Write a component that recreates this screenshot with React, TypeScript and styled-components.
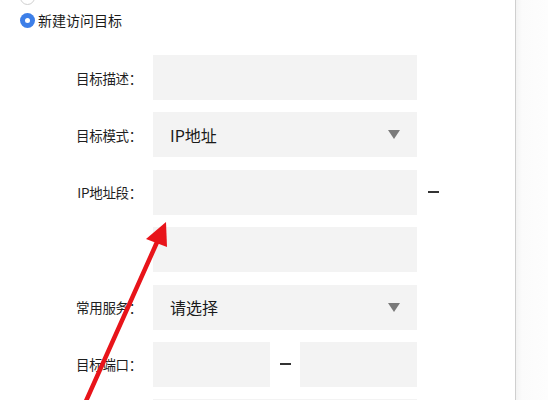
import React from "react";
import styled, { createGlobalStyle } from "styled-components";

const Global = createGlobalStyle`
  html, body { margin: 0; padding: 0; background: #fff; }
  body { font-family: "Noto Sans CJK SC", "Noto Sans", sans-serif; color: #333; overflow: hidden; }
`;

const Page = styled.div`
  position: relative;
  display: flex;
  width: 548px;
  height: 400px;
  overflow: hidden;
`;

const Main = styled.div`
  width: 515px;
  flex: none;
  display: flex;
  flex-direction: column;
`;

const Side = styled.div`
  flex: 1;
  border-left: 1px solid #cfcfcf;
  background: linear-gradient(90deg, #f3f3f3 0px, #fbfbfb 6px, #fdfdfd 100%);
`;

const RadioList = styled.div`
  display: flex;
  flex-direction: column;
  gap: 3px;
  margin-top: -13px;
  padding-left: 20px;
`;

const RadioRow = styled.label`
  display: flex;
  align-items: center;
  gap: 3px;
  height: 20px;
  font-size: 14px;
  color: #1a1a1a;
`;

const RadioDot = styled.span<{ $checked?: boolean }>`
  width: 15px;
  height: 15px;
  box-sizing: border-box;
  border-radius: 50%;
  flex: none;
  background: ${(p) => (p.$checked ? "#3d7fe8" : "#fff")};
  border: ${(p) => (p.$checked ? "none" : "1px solid #cfcfcf")};
  display: flex;
  align-items: center;
  justify-content: center;
  &::after {
    content: "";
    width: 5px;
    height: 5px;
    border-radius: 50%;
    background: #fff;
    display: ${(p) => (p.$checked ? "block" : "none")};
  }
`;

const Form = styled.div`
  display: flex;
  flex-direction: column;
  gap: 12.4px;
  margin-top: 25px;
`;

const Row = styled.div`
  display: grid;
  grid-template-columns: 142px 264px auto;
  column-gap: 11px;
  align-items: center;
  height: 45px;
`;

const Label = styled.div`
  text-align: right;
  font-size: 13.5px;
  color: #1f1f1f;
  white-space: nowrap;
  letter-spacing: -0.3px;
`;

const Input = styled.div`
  height: 45px;
  background: #f3f3f3;
`;

const Select = styled.div`
  height: 45px;
  background: #f3f3f3;
  display: flex;
  align-items: center;
  justify-content: space-between;
  padding: 0 17px 0 17px;
  font-size: 16px;
  color: #1a1a1a;
`;

const Caret = styled.span`
  width: 0;
  height: 0;
  border-left: 6.5px solid transparent;
  border-right: 6.5px solid transparent;
  border-top: 9px solid #7a7a7a;
`;

const Dash = styled.span<{ $w?: number }>`
  display: block;
  width: ${(p) => p.$w ?? 11}px;
  height: 2px;
  background: #333;
`;

const Range = styled.div`
  display: grid;
  grid-template-columns: 117px 1fr 117px;
  align-items: center;
  justify-items: center;
`;

const Arrow = styled.svg`
  position: absolute;
  left: 0;
  top: 0;
  pointer-events: none;
`;

export default function App() {
  return (
    <>
      <Global />
      <Page>
        <Main>
          <RadioList>
            <RadioRow>
              <RadioDot />
            </RadioRow>
            <RadioRow>
              <RadioDot $checked />
              新建访问目标
            </RadioRow>
          </RadioList>
          <Form>
            <Row>
              <Label>目标描述：</Label>
              <Input />
            </Row>
            <Row>
              <Label>目标模式：</Label>
              <Select>
                IP地址
                <Caret />
              </Select>
            </Row>
            <Row>
              <Label>IP地址段：</Label>
              <Input />
              <Dash />
            </Row>
            <Row>
              <Label />
              <Input />
            </Row>
            <Row>
              <Label>常用服务：</Label>
              <Select>
                请选择
                <Caret />
              </Select>
            </Row>
            <Row>
              <Label>目标端口：</Label>
              <Range>
                <Input style={{ width: "100%" }} />
                <Dash />
                <Input style={{ width: "100%" }} />
              </Range>
            </Row>
            <Row>
              <Label />
              <Input />
            </Row>
          </Form>
        </Main>
        <Side />
        <Arrow width="548" height="400" viewBox="0 0 548 400">
          <line x1="82" y1="410" x2="158" y2="240" stroke="#e8141a" strokeWidth="4.5" strokeLinecap="round" />
          <polygon points="166,222 146,239 167,247" fill="#e8141a" />
        </Arrow>
      </Page>
    </>
  );
}
